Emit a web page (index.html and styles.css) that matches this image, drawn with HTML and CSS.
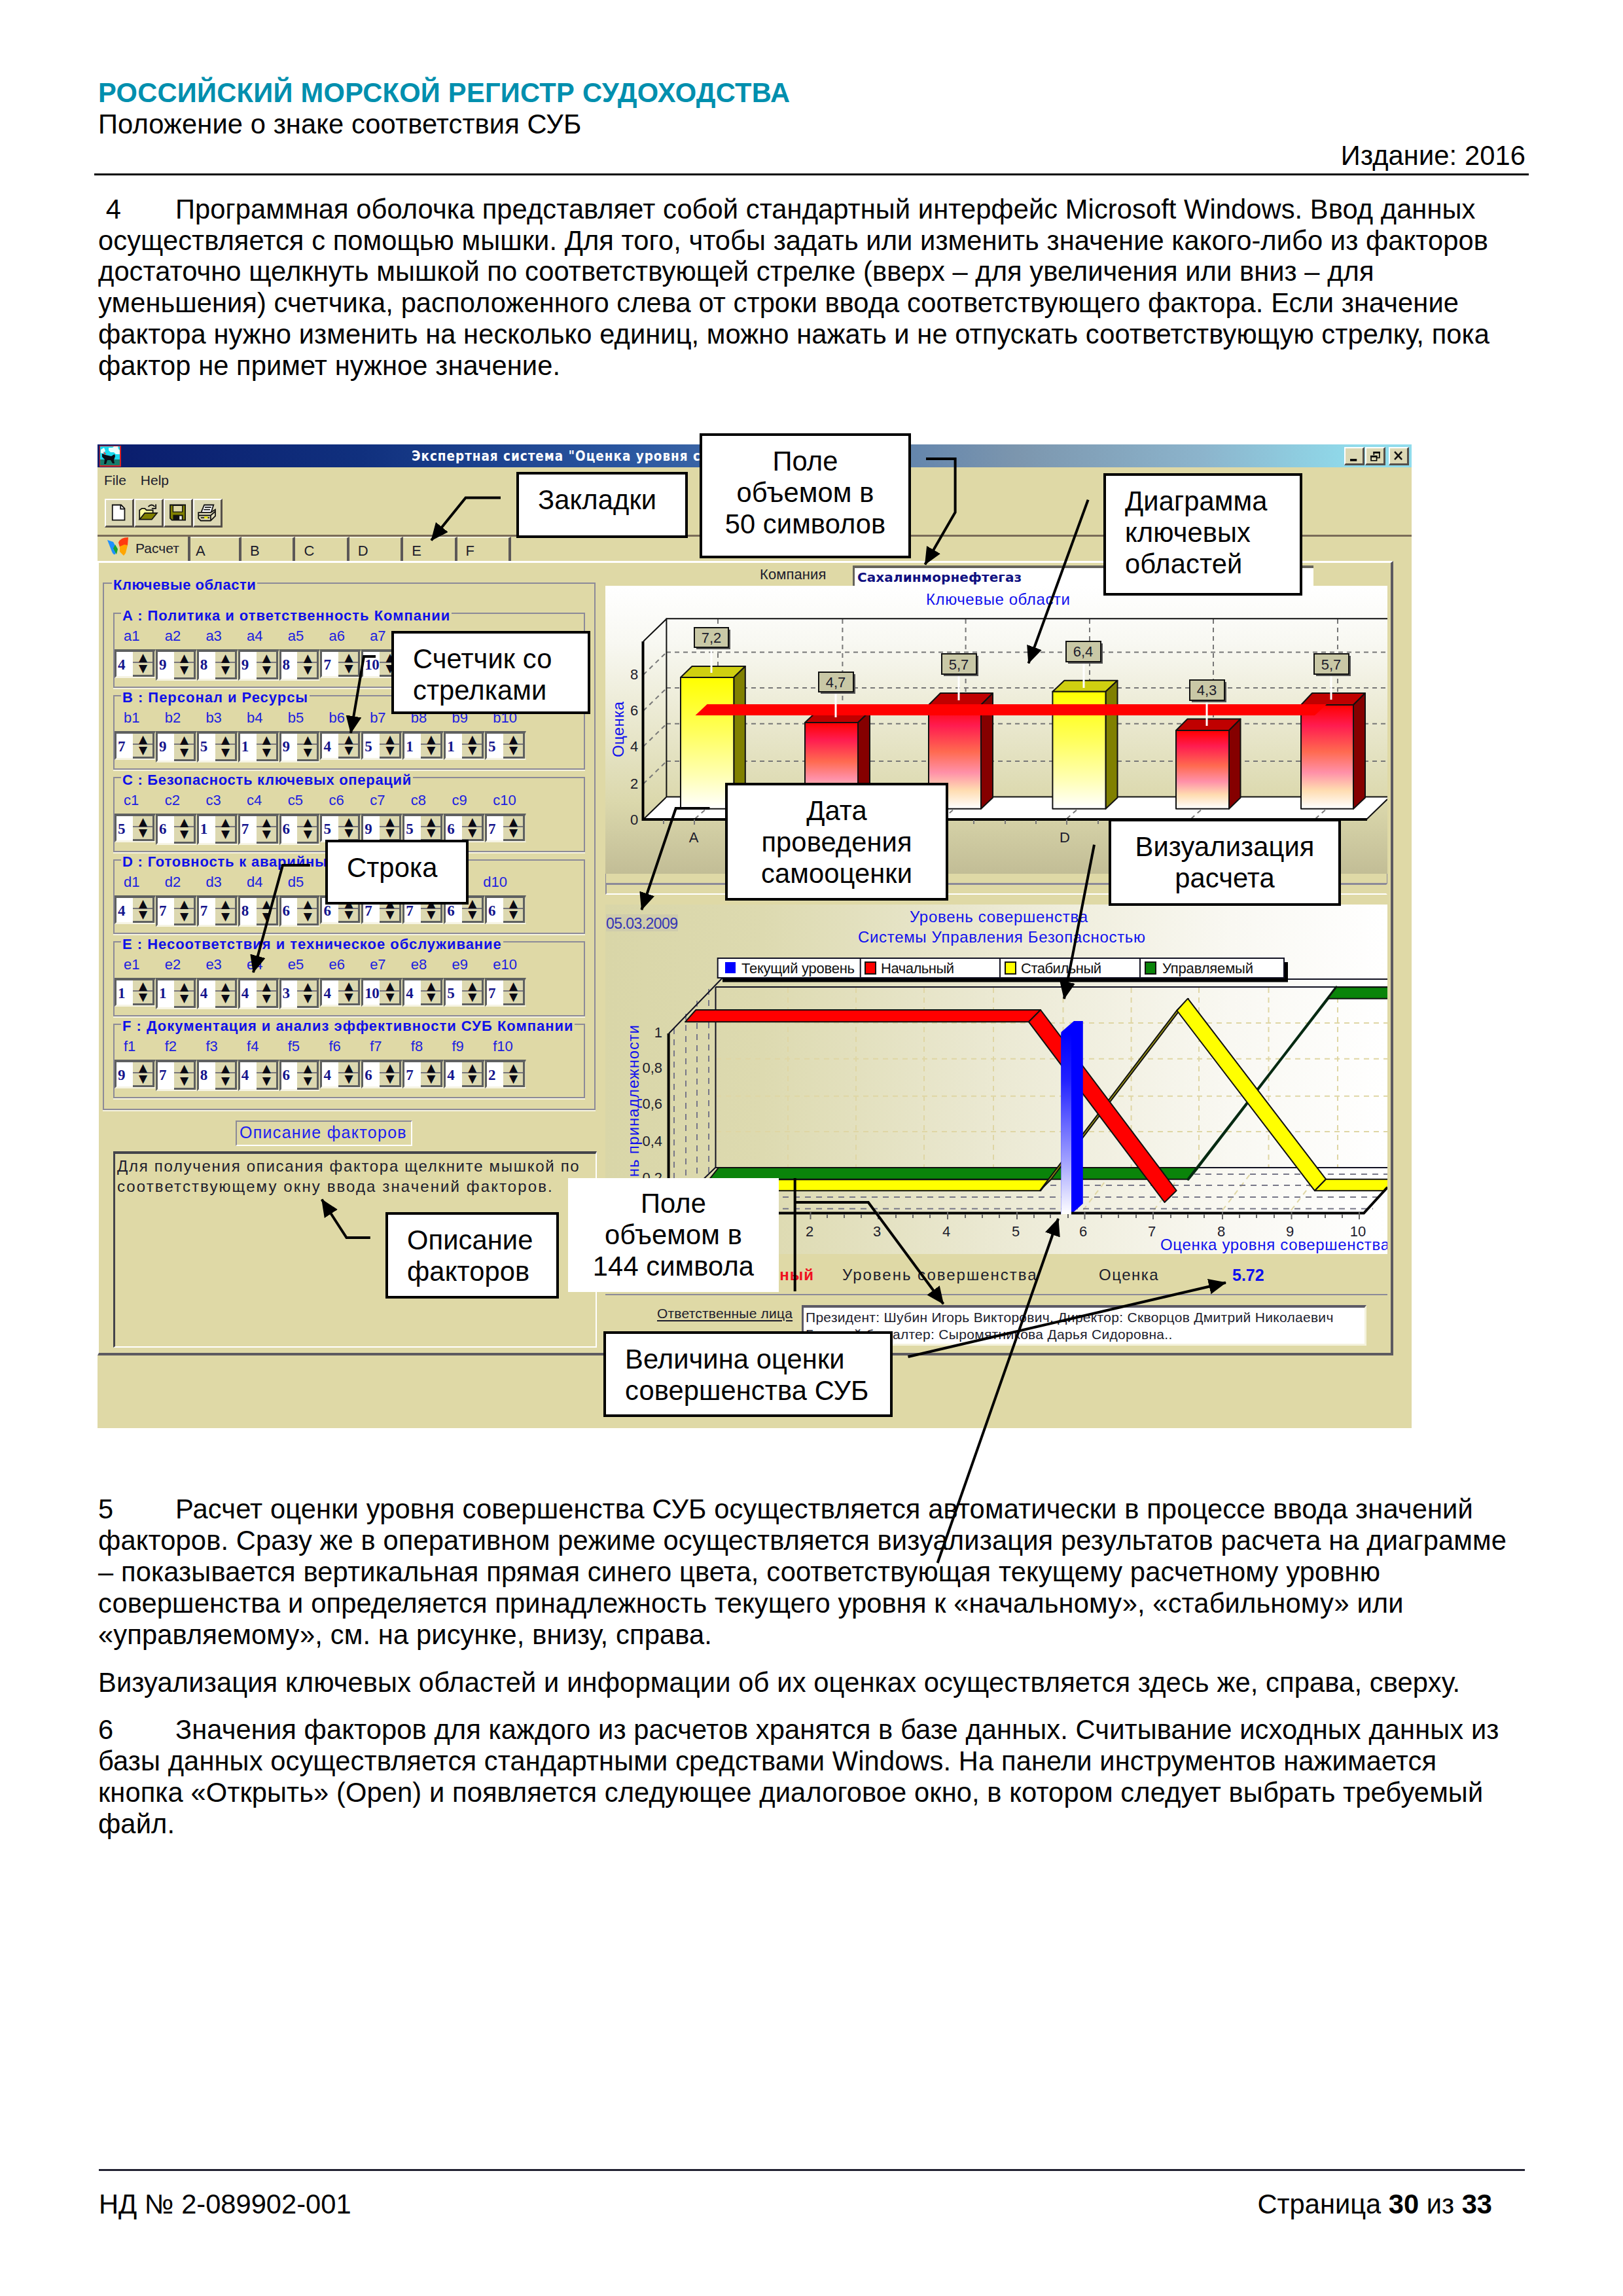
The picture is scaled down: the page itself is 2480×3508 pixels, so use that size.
FILE: index.html
```html
<!DOCTYPE html>
<html lang="ru">
<head>
<meta charset="utf-8">
<title>Положение о знаке соответствия СУБ</title>
<link rel="stylesheet" href="styles.css">
</head>
<body>
<div class="sheet">
  <header class="head">
    <div class="org">РОССИЙСКИЙ МОРСКОЙ РЕГИСТР СУДОХОДСТВА</div>
    <div>Положение о знаке соответствия СУБ</div>
    <div class="edition">Издание: 2016</div>
  </header>

  <p class="para first"><span class="num">&nbsp;4</span>Программная оболочка представляет собой стандартный интерфейс Microsoft Windows. Ввод данных<br>осуществляется с помощью мышки. Для того, чтобы задать или изменить значение какого-либо из факторов<br>достаточно щелкнуть мышкой по соответствующей стрелке (вверх – для увеличения или вниз – для<br>уменьшения) счетчика, расположенного слева от строки ввода соответствующего фактора. Если значение<br>фактора нужно изменить на несколько единиц, можно нажать и не отпускать соответствующую стрелку, пока<br>фактор не примет нужное значение.</p>

  <figure class="figure">
    <div class="app">
      <div class="titlebar">
        <svg class="appicon" viewBox="0 0 33 32"><rect width="33" height="32" fill="#d22"/><rect x="1" y="1" width="30" height="29" fill="#19d8ee"/><path d="M14 3h6l2-2h6l1 4 2 2v6h-6l-3-3h-5l-3-3zM2 6l5-3 2 5-4 4-3-1z" fill="#e8ffff"/><path d="M1 21h30v9H1z" fill="#177c6c"/><path d="M4 12l5 2 9 2 5-3 1 3-2 6 1 5h-3l-3-5h-5l-2 6H7l1-7-4-4z" fill="#0a0a14"/><path d="M6 9l4 3-2 2z" fill="#e33"/></svg>
        <span class="caption">Экспертная система "Оценка уровня совершенства"</span>
        <span class="winbtns">
          <svg class="wb" viewBox="0 0 30 27"><path d="M8 21h12" stroke="#000" stroke-width="4"/></svg>
          <svg class="wb" viewBox="0 0 30 27"><path d="M12 6h12v3H12zM7 13h12v3H7z" fill="#000"/><path d="M13 12V7h10v10h-4M8 14h10v8H8z" fill="none" stroke="#000" stroke-width="2"/></svg>
          <svg class="wb close" viewBox="0 0 30 27"><path d="M8 6l13 14M21 6L8 20" stroke="#111" stroke-width="3"/></svg>
        </span>
      </div>
      <div class="menubar"><span>File</span><span>Help</span></div>
      <div class="toolbar">
        <svg class="tb" viewBox="0 0 45 43"><path d="M11 8h15l6 6v20H11z" fill="#fff" stroke="#111" stroke-width="2"/><path d="M25 8v7h7" fill="none" stroke="#111" stroke-width="2"/></svg>
        <svg class="tb" viewBox="0 0 45 43"><path d="M7 33V17l4-3h5l3 3h11v5" fill="#ffffa0" stroke="#111" stroke-width="2"/><path d="M7 33l9-11h21L28 33z" fill="#808000" stroke="#111" stroke-width="2"/><path d="M22 11q6-6 11 0M35 7v7h-7" fill="none" stroke="#111" stroke-width="2"/></svg>
        <svg class="tb" viewBox="0 0 45 43"><path d="M9 8h26v26H12l-3-3z" fill="#808000" stroke="#111" stroke-width="2"/><path d="M14 9h16v11H14z" fill="#dfd9a6" stroke="#111" stroke-width="1.5"/><path d="M14 25h17v9H14z" fill="#111"/><path d="M25 27h4v6h-4z" fill="#eee"/></svg>
        <svg class="tb" viewBox="0 0 45 43"><path d="M12 20l5-12h16l-4 12" fill="#fff" stroke="#111" stroke-width="2"/><path d="M18 12h11M16 16h11" stroke="#111" stroke-width="2"/><path d="M7 21h21l8-5v11l-8 8H11l-4-4z" fill="#e4e0bd" stroke="#111" stroke-width="2"/><path d="M7 26h21v8M28 26l8-7M11 30h15" fill="none" stroke="#111" stroke-width="2"/><path d="M17 28h6v3h-6z" fill="#ee0"/></svg>
      </div>
      <div class="tabs">
        <div class="tab active"><svg class="logo" viewBox="0 0 32 28"><path d="M0 4l9 3 6 11-3 8q-3 1-5-4z" fill="#1e90ff"/><path d="M9 17l3-6 4 7-2 8z" fill="#1ca32a"/><path d="M17 8q3-8 15-8l-1 12-6 5-6-2z" fill="#ff3a10"/><path d="M19 14l7-3 5 1-3 12-3 4-6-6z" fill="#ffa500"/></svg><span>Расчет</span></div>
        <div class="tab">A</div><div class="tab">B</div><div class="tab">C</div><div class="tab">D</div><div class="tab">E</div><div class="tab">F</div>
      </div>

      <div class="page">
        <div class="left">
          <fieldset class="areas">
            <legend>Ключевые области</legend>
            <fieldset class="group">
              <legend class="la">A : Политика и ответственность Компании</legend>
              <div class="names"><span>a1</span><span>a2</span><span>a3</span><span>a4</span><span>a5</span><span>a6</span><span>a7</span><span>a8</span><span>a9</span><span>a10</span></div>
              <div class="spins"><span>4</span><span>9</span><span>8</span><span>9</span><span>8</span><span>7</span><span>10</span><span>8</span><span>7</span><span>6</span></div>
            </fieldset>
            <fieldset class="group">
              <legend class="lb">B : Персонал и Ресурсы</legend>
              <div class="names"><span>b1</span><span>b2</span><span>b3</span><span>b4</span><span>b5</span><span>b6</span><span>b7</span><span>b8</span><span>b9</span><span>b10</span></div>
              <div class="spins"><span>7</span><span>9</span><span>5</span><span>1</span><span>9</span><span>4</span><span>5</span><span>1</span><span>1</span><span>5</span></div>
            </fieldset>
            <fieldset class="group">
              <legend class="lc">C : Безопасность ключевых операций</legend>
              <div class="names"><span>c1</span><span>c2</span><span>c3</span><span>c4</span><span>c5</span><span>c6</span><span>c7</span><span>c8</span><span>c9</span><span>c10</span></div>
              <div class="spins"><span>5</span><span>6</span><span>1</span><span>7</span><span>6</span><span>5</span><span>9</span><span>5</span><span>6</span><span>7</span></div>
            </fieldset>
            <fieldset class="group">
              <legend class="ld">D : Готовность к аварийным ситуациям</legend>
              <div class="names"><span>d1</span><span>d2</span><span>d3</span><span>d4</span><span>d5</span><span>d6</span><span>d7</span><span>d8</span><span>d9</span><span class="near">d10</span></div>
              <div class="spins"><span>4</span><span>7</span><span>7</span><span>8</span><span>6</span><span>6</span><span>7</span><span>7</span><span>6</span><span>6</span></div>
            </fieldset>
            <fieldset class="group">
              <legend class="le">E : Несоответствия и техническое обслуживание</legend>
              <div class="names"><span>e1</span><span>e2</span><span>e3</span><span>e4</span><span>e5</span><span>e6</span><span>e7</span><span>e8</span><span>e9</span><span>e10</span></div>
              <div class="spins"><span>1</span><span>1</span><span>4</span><span>4</span><span>3</span><span>4</span><span>10</span><span>4</span><span>5</span><span>7</span></div>
            </fieldset>
            <fieldset class="group">
              <legend class="lf">F : Документация и анализ эффективности СУБ Компании</legend>
              <div class="names"><span>f1</span><span>f2</span><span>f3</span><span>f4</span><span>f5</span><span>f6</span><span>f7</span><span>f8</span><span>f9</span><span>f10</span></div>
              <div class="spins"><span>9</span><span>7</span><span>8</span><span>4</span><span>6</span><span>4</span><span>6</span><span>7</span><span>4</span><span>2</span></div>
            </fieldset>
          </fieldset>
          <div class="desc-title">Описание факторов</div>
          <div class="memo">Для получения описания фактора щелкните мышкой по<br><span class="m2">соответствующему окну ввода значений факторов.</span></div>
        </div>

        <div class="right">
          <div class="company"><span class="clabel">Компания</span><div class="cinput">Сахалинморнефтегаз</div></div>

          <svg class="chart1" viewBox="925 896 1195 440" font-family="Liberation Sans, Arial, sans-serif">
            <defs>
              <linearGradient id="bg1" x2="0" y2="1"><stop offset="0" stop-color="#fff"/><stop offset=".2" stop-color="#f8f8f2"/><stop offset=".75" stop-color="#dbd8ac"/><stop offset="1" stop-color="#c2bd96"/></linearGradient>
              <linearGradient id="yel" x2="0" y2="1"><stop offset="0" stop-color="#ff0"/><stop offset=".4" stop-color="#ffff58"/><stop offset=".75" stop-color="#ffffb4"/><stop offset="1" stop-color="#fff"/></linearGradient>
              <linearGradient id="red" x2="0" y2="1"><stop offset="0" stop-color="#f00"/><stop offset=".2" stop-color="#ff1c50"/><stop offset=".45" stop-color="#ff6a50"/><stop offset=".65" stop-color="#ff90a8"/><stop offset=".82" stop-color="#ffdcb0"/><stop offset="1" stop-color="#fff"/></linearGradient>
            </defs>
            <rect x="925" y="896" width="1195" height="440" fill="url(#bg1)"/>
            <path d="M983 1253L1018 1218.600H2120V1222L2088 1253z" fill="#fff"/>
            <g stroke="#777" stroke-width="2" stroke-dasharray="7 6" fill="none">
              <path d="M1018 997.400H2120M1018 1052H2120M1018 1106.700H2120M1018 1164H2120"/>
              <path d="M1097 947V1218M1287.400 947V1218M1475.600 947V1218M1665 947V1218M1854 947V1218M2044 947V1218"/>
              <path d="M983 1032l35-34M983 1087l35-34M983 1141.500l35-34M983 1198.600l35-34"/>
              <path d="M1062 1252l18-16M1441 1252l18-16M1630 1252l18-16M1820 1252l18-16M2010 1252l18-16"/>
            </g>
            <path d="M2120 946.200H1018.400V1218.600H2120M983 981L1018 947M983 1253l35-34M2088 1253l32-31" fill="none" stroke="#111" stroke-width="2"/>
            <path d="M982.500 981V1253H2089" fill="none" stroke="#000" stroke-width="4"/>
            <path d="M1061 1253v8M1630 1253v8M1014 1254v6M1488 1254v6M1536 1254v6M1583 1254v6M1678 1254v6" stroke="#777" stroke-width="2"/>
            <g stroke="#111" stroke-width="2" stroke-linejoin="round">
              <g><path d="M1040 1036l17.500-17h81.300L1121.300 1036z" fill="#cfcf10"/><path d="M1121.300 1036l17.500-17V1219.800L1121.300 1236.800z" fill="#808000"/><path d="M1040 1036h81.300v200.800H1040z" fill="url(#yel)"/></g>
              <g><path d="M1230 1105l18-17h81L1311 1105z" fill="#c00000"/><path d="M1311 1105l18-17V1219.800L1311 1236.800z" fill="#850000"/><path d="M1230 1105h81v131.800H1230z" fill="url(#red)"/></g>
              <g><path d="M1419 1078l18-18h80L1499 1078z" fill="#c00000"/><path d="M1499 1078l18-18V1219.800L1499 1236.800z" fill="#850000"/><path d="M1419 1078h80v158.800H1419z" fill="url(#red)"/></g>
              <g><path d="M1608.400 1057.700l18-17h81L1689.500 1057.700z" fill="#cfcf10"/><path d="M1689.500 1057.700l18-17V1219.800L1689.500 1236.800z" fill="#808000"/><path d="M1608.400 1057.700h81.100v179.100H1608.400z" fill="url(#yel)"/></g>
              <g><path d="M1797 1117l17.500-17.500h81L1878 1117z" fill="#c00000"/><path d="M1878 1117l17.500-17.500V1219.800L1878 1236.800z" fill="#850000"/><path d="M1797 1117h81v119.800H1797z" fill="url(#red)"/></g>
              <g><path d="M1988 1078l17-18h81L2068 1078z" fill="#c00000"/><path d="M2068 1078l18-18V1219.800L2068 1236.800z" fill="#850000"/><path d="M1988 1078h80v158.800H1988z" fill="url(#red)"/></g>
            </g>
            <path d="M1062.500 1094l18-17H2027L2009 1094z" fill="#f00"/>
            <path d="M1087 991v38M1277 1058v39M1465 1031v40M1656 1012v40M1844 1071v39M2034 1031v39" stroke="#fff" stroke-width="3"/>
            <g fill="#555"><path d="M1064 963h52v30h-52zM1254 1031h53v30h-53zM1442 1003h53v31h-53zM1632 984h53v31h-53zM1821 1043h53v31h-53zM2011 1003h53v31h-53z"/></g>
            <g fill="#c9c8a6" stroke="#111" stroke-width="2"><path d="M1061 960h52v30h-52zM1251 1028h53v30h-53zM1439 1000h53v31h-53zM1629 981h53v31h-53zM1818 1040h53v31h-53zM2008 1000h53v31h-53z"/></g>
            <g font-size="22" fill="#1c1c2c" text-anchor="middle">
              <text x="1087" y="983">7,2</text><text x="1277" y="1051">4,7</text><text x="1465" y="1024">5,7</text><text x="1655" y="1004">6,4</text><text x="1844" y="1063">4,3</text><text x="2034" y="1024">5,7</text>
              <text x="969" y="1039">8</text><text x="969" y="1094">6</text><text x="969" y="1149">4</text><text x="969" y="1206">2</text><text x="969" y="1261">0</text>
              <text x="1060" y="1288">A</text><text x="1627" y="1288">D</text>
            </g>
            <text x="1415" y="925" font-size="24" fill="#11e" textLength="220">Ключевые области</text>
            <text transform="translate(953 1158) rotate(-90)" font-size="24" fill="#11e" textLength="85">Оценка</text>
          </svg>
          <div class="strip"></div>

          <svg class="chart2" viewBox="925 1383 1195 534" font-family="Liberation Sans, Arial, sans-serif">
            <defs>
              <linearGradient id="bg2"><stop offset="0" stop-color="#d9d6a8"/><stop offset=".2" stop-color="#dddab0"/><stop offset=".5" stop-color="#ebe9d3"/><stop offset=".8" stop-color="#f9f8f2"/><stop offset="1" stop-color="#fff"/></linearGradient>
              <linearGradient id="blu" x2="0" y2="1"><stop offset="0" stop-color="#00f"/><stop offset=".25" stop-color="#2020ff"/><stop offset=".7" stop-color="#a0a0ff"/><stop offset="1" stop-color="#fff"/></linearGradient>
            </defs>
            <rect x="925" y="1383" width="1195" height="534" fill="url(#bg2)"/>
            <rect x="926" y="1398" width="110" height="26" fill="#cfccac"/>
            <g stroke="#dfd6a4" stroke-width="2" stroke-dasharray="8 7" fill="none">
              <path d="M1094 1564H2120M1094 1618.700H2120M1094 1675.700H2120M1094 1730H2120"/>
              <path d="M1204 1510V1785M1308 1510V1785M1412 1510V1785M1518 1510V1785M1624.500 1510V1785M1728.600 1510V1785M1832 1510V1785M1938.500 1510V1785M2044 1510V1785"/>
              <path d="M1655 1850l46-60M1763 1850l46-60M1868 1850l46-60M1973 1850l46-60"/>
            </g>
            <g stroke="#777788" stroke-width="2" stroke-dasharray="9 8" fill="none">
              <path d="M1030 1572V1847M1048 1550V1830M1065 1530V1812M1083 1512V1797"/>
              <path d="M1825 1795H2120M1605 1812H2118M1094 1830H2114M1060 1847.700H2098"/>
            </g>
            <path d="M1022 1580L1104 1495M1960 1497H2120M1093.500 1509H2120M1093.500 1509V1785H2120M1022 1854L1093 1785" fill="none" stroke="#112" stroke-width="2"/>
            <g stroke="#111" stroke-width="2" stroke-linejoin="round">
              <path d="M1084 1802.700L1098 1785H1830L1815.600 1802.700z" fill="#0a840a"/>
              <path d="M1815.600 1802.700L1830 1785L2042 1509.300L2029 1526.700z" fill="#062a12" stroke="#062a12" stroke-width="4"/>
              <path d="M2042 1509.300H2122V1526.700H2029z" fill="#0a840a"/>
              <path d="M1063 1820.300L1076 1803.300H1603L1590 1820.300z" fill="#ff0"/>
              <path d="M1589 1820L1606 1803L1816 1527L1798 1545z" fill="#a09a10"/>
              <path d="M1798.400 1545L1815 1526.700L2026 1802.700L2009 1820.300z" fill="#ff0"/>
              <path d="M2026 1802.700H2122V1813L2116 1820.300H2009z" fill="#ff0"/>
              <path d="M1047 1562.300L1063.300 1544H1590L1572 1562.300z" fill="#f00"/>
              <path d="M1572 1562.300L1590 1544L1797.700 1820L1779.500 1838z" fill="#f00"/>
            </g>
            <path d="M1621.400 1578L1641 1561H1654.800V1840L1637 1856H1621.400z" fill="#00f"/>
            <path d="M1621.400 1580H1637V1856H1621.400z" fill="url(#blu)"/>
            <path d="M1021.600 1580V1854.500H1621M1637 1854.500H2084L2120 1815" fill="none" stroke="#000" stroke-width="4"/>
            <path d="M1238.500 1853v11M1342 1853v11M1448 1853v11M1554 1853v11M1657.500 1853v11M1762 1853v11M1868 1853v11M1973.500 1853v11M2077 1853v11M1264 1856v6M1290 1856v6M1316 1856v6M1369 1856v6M1395 1856v6M1421 1856v6M1475 1856v6M1501 1856v6M1527 1856v6M1580 1856v6M1605 1856v6M1632 1856v6M1683 1856v6M1709 1856v6M1736 1856v6M1789 1856v6M1815 1856v6M1840 1856v6M1894 1856v6M1920 1856v6M1947 1856v6M1999 1856v6M2025 1856v6M2051 1856v6" stroke="#666" stroke-width="2"/>
            <path d="M1104 1471H1968V1501.500H1104z" fill="#000"/>
            <path d="M1096.700 1465H1962V1495H1096.700zM1314.700 1465V1495M1528 1465V1495M1742 1465V1495" fill="#fff" stroke="#112" stroke-width="2"/>
            <path d="M1108 1471h16v17h-16z" fill="#00f"/>
            <g stroke="#111" stroke-width="2"><path d="M1322 1471h16v18h-16z" fill="#f00"/><path d="M1536 1471h16v18h-16z" fill="#ff0"/><path d="M1750 1471h16v18h-16z" fill="#0a840a"/></g>
            <g font-size="22" fill="#111">
              <text x="1133" y="1488" textLength="173">Текущий уровень</text><text x="1346" y="1488" textLength="112">Начальный</text><text x="1560" y="1488" textLength="123">Стабильный</text><text x="1776" y="1488" textLength="139">Управляемый</text>
            </g>
            <g font-size="22" fill="#1c1c2c" text-anchor="end">
              <text x="1012" y="1586">1</text><text x="1012" y="1640">0,8</text><text x="1012" y="1695">0,6</text><text x="1012" y="1752">0,4</text><text x="1012" y="1808">0,2</text>
            </g>
            <g font-size="22" fill="#1c1c2c" text-anchor="middle">
              <text x="1237" y="1890">2</text><text x="1340" y="1890">3</text><text x="1446" y="1890">4</text><text x="1552" y="1890">5</text><text x="1655" y="1890">6</text><text x="1760" y="1890">7</text><text x="1866" y="1890">8</text><text x="1971" y="1890">9</text><text x="2075" y="1890">10</text>
            </g>
            <g font-size="24" fill="#11e">
              <text x="926" y="1420" font-size="23" fill="#3434b4" textLength="110">05.03.2009</text>
              <text x="1390" y="1410" textLength="272">Уровень совершенства</text>
              <text x="1311" y="1441" textLength="439">Системы Управления Безопасностью</text>
              <text x="1773" y="1911" textLength="350">Оценка уровня совершенства</text>
              <text transform="translate(976 1871) rotate(-90)" textLength="304">Степень принадлежности</text>
            </g>
          </svg>

          <div class="status"><span class="lvl">Начальный</span><span class="cap1">Уровень совершенства</span><span class="cap2">Оценка</span><b>5.72</b></div>
          <div class="resp"><span class="rlabel">Ответственные лица</span><div class="rinput">Президент: Шубин Игорь Викторович, Директор: Скворцов Дмитрий Николаевич<br>Главный бухгалтер: Сыромятникова Дарья Сидоровна..</div></div>
        </div>
      </div>
    </div>

    <div class="callout c1">Закладки</div>
    <div class="callout c2">Поле<br>объемом в<br>50 символов</div>
    <div class="callout c3">Диаграмма<br>ключевых<br>областей</div>
    <div class="callout c4">Счетчик со<br>стрелками</div>
    <div class="callout c5">Строка</div>
    <div class="callout c6">Дата<br>проведения<br>самооценки</div>
    <div class="callout c7">Визуализация<br>расчета</div>
    <div class="callout c8">Описание<br>факторов</div>
    <div class="callout c9">Поле<br>объемом в<br>144 символа</div>
    <div class="callout c10">Величина оценки<br>совершенства СУБ</div>

    <svg class="arrows" viewBox="149 679 2008 1740">
      <defs><marker id="tip" viewBox="0 0 27 24" refX="26" refY="12" markerWidth="27" markerHeight="24" markerUnits="userSpaceOnUse" orient="auto"><path d="M0 0L27 12L0 24z"/></marker></defs>
      <g fill="none" stroke="#000" stroke-width="4">
        <path d="M765 760.500H711.500L659 825.600" marker-end="url(#tip)"/>
        <path d="M1415 701H1459.600V782.700L1413.500 862.500" marker-end="url(#tip)"/>
        <path d="M1662.600 763.600L1571.600 1013.400" marker-end="url(#tip)"/>
        <path d="M574 1003H556L536 1120" marker-end="url(#tip)"/>
        <path d="M473.800 1322H432L387 1485.800" marker-end="url(#tip)"/>
        <path d="M1084.500 1235H1032.700L980.400 1390" marker-end="url(#tip)"/>
        <path d="M1672 1290.600L1626 1526" marker-end="url(#tip)"/>
        <path d="M565.800 1891H529.500L491.700 1832.700" marker-end="url(#tip)"/>
        <path d="M1215.600 1837H1326.800L1441.500 1992.300" marker-end="url(#tip)"/>
        <path d="M1387.500 2073L1873 1959.700" marker-end="url(#tip)"/>
        <path d="M1432.600 2388L1617 1862" marker-end="url(#tip)"/>
        <path d="M1214.700 1800V1973"/>
      </g>
    </svg>
  </figure>

  <p class="para"><span class="num">5</span>Расчет оценки уровня совершенства СУБ осуществляется автоматически в процессе ввода значений<br>факторов. Сразу же в оперативном режиме осуществляется визуализация результатов расчета на диаграмме<br>– показывается вертикальная прямая синего цвета, соответствующая текущему расчетному уровню<br>совершенства и определяется принадлежность текущего уровня к «начальному», «стабильному» или<br>«управляемому», см. на рисунке, внизу, справа.</p>
  <p class="para">Визуализация ключевых областей и информации об их оценках осуществляется здесь же, справа, сверху.</p>
  <p class="para last"><span class="num">6</span>Значения факторов для каждого из расчетов хранятся в базе данных. Считывание исходных данных из<br>базы данных осуществляется стандартными средствами Windows. На панели инструментов нажимается<br>кнопка «Открыть» (Open) и появляется следующее диалоговое окно, в котором следует выбрать требуемый<br>файл.</p>

  <footer class="foot"><span>НД № 2-089902-001</span><span class="pages">Страница <b>30</b> из <b>33</b></span></footer>
</div>
</body>
</html>
```
FILE: styles.css
```css
* { box-sizing: border-box; }
body {
  margin: 0;
  background: #fff;
  color: #000;
  font-family: "Liberation Sans", Arial, sans-serif;
  font-size: 41.67px;
  line-height: 47.9px;
}
.sheet {
  width: 2480px;
  height: 3508px;
  padding: 117.6px 144px 116.5px 149px;
  display: flex;
  flex-direction: column;
  white-space: nowrap;
}

/* running head */
.head {
  margin-left: -5px;
  padding-left: 6px;
  height: 150px;
  line-height: 48.2px;
  border-bottom: 3px solid #000;
  letter-spacing: 0.1px;
}
.org { color: #008fae; font-weight: bold; letter-spacing: 0.26px; }
.edition { text-align: right; padding-right: 5px; }

.para { margin: 0 0 25px 1px; letter-spacing: 0.13px; }
.para.first { margin-top: 28px; margin-bottom: 0; letter-spacing: 0.07px; }
.para.last { letter-spacing: 0.1px; }
.num { display: inline-block; width: 118px; }

.foot {
  margin: auto 6px 0 2px;
  padding: 27px 50px 0 0;
  border-top: 3px solid #223;
  display: flex;
  justify-content: space-between;
}

/* figure */
.figure {
  position: relative;
  width: 2008px;
  height: 1503px;
  margin: 96px 0 100px;
  flex: none;
}
.app {
  width: 2008px;
  height: 1503px;
  background: #dfd9a6;
  display: flex;
  flex-direction: column;
  font-size: 21.5px;
  line-height: 26px;
  color: #1c1c2c;
}
.titlebar {
  height: 35px;
  padding: 0 4px 0 3px;
  display: flex;
  align-items: center;
  background: linear-gradient(90deg, #0a1c6c 0%, #10307e 20%, #2a56a0 40%, #5078ac 55%, #7c96ae 70%, #8cb4cc 84%, #90dcec 96%);
}
.appicon { width: 33px; height: 32px; }
.caption {
  margin-left: 444px;
  color: #fff;
  font-weight: bold;
  font-family: "DejaVu Sans Condensed", "DejaVu Sans", sans-serif;
  font-stretch: condensed;
  font-size: 20.500px;
  letter-spacing: 0.95px;
  width: 700px;
}
.winbtns { margin-left: auto; display: flex; gap: 1px; }
.wb, .tb {
  background: #dcd8b4;
  border: solid;
  border-width: 2px 3px 3px 2px;
  border-color: #fff #56504a #56504a #fff;
}
.wb { width: 31px; height: 28px; }
.wb.close { margin-left: 4px; }
.menubar { height: 48px; padding: 6px 10px 0; display: flex; gap: 22px; font-size: 21px; line-height: 28px; }
.toolbar { height: 55px; padding-left: 11px; display: flex; }
.tb { width: 45px; height: 44px; }

.tabs { height: 40px; display: flex; border-top: 3px solid #7a6c58; }
.tab {
  width: 82.4px;
  padding: 6px 0 0 13px;
  font-size: 22px;
  line-height: 28px;
  border-right: 4px solid #5c5858;
  border-top: 2px solid #f4f2dc;
}
.tab:nth-child(2) { width: 78px; padding-left: 8px; }
.tab.active { width: 142px; padding: 0 0 0 15px; display: flex; gap: 11px; border-top: 0; }
.tab.active span { padding-top: 4px; font-size: 21px; letter-spacing: 0; }
.logo { width: 32px; height: 28px; margin-top: 1px; }

.page {
  width: 1980px;
  height: 1214px;
  border: solid;
  border-width: 3px 4px 4px 2px;
  border-color: #fff #5c5a60 #5c5a60 #fff;
  padding: 0 4px 0 6px;
  display: flex;
  gap: 13px;
}
.left { width: 755px; padding-top: 16px; }

/* group boxes */
fieldset {
  margin: 0;
  min-width: 0;
  padding: 0;
  border: 2px solid #8c8a98;
  box-shadow: 0 2px 0 #f6f4e0;
}
legend {
  padding: 6px 2px 0;
  height: 29px;
  line-height: 24px;
  font-weight: bold;
  font-size: 22px;
  color: #1010e8;
}
.areas { width: 753px; height: 820px; padding: 17.500px 0 0 14px; }
.areas > legend { margin-left: -2px; letter-spacing: 0.5px; }
.group { width: 721px; height: 128.400px; margin-top: -2.900px; }
.areas > legend + .group { margin-top: 0; }
.group > legend { margin-left: 10px; letter-spacing: 0.98px; }
.group > .lc { letter-spacing: 0.7px; }
.group > .ld { letter-spacing: 0.8px; }
.names {
  display: grid;
  grid-template-columns: repeat(10, 62.700px);
  padding-left: 14px;
  line-height: 40px;
  color: #2020e0;
  font-size: 22px;
}
.near { margin-left: -15px; }
.spins { display: grid; grid-template-columns: repeat(10, 62.900px); align-items: start; }
.spins span {
  height: 44px;
  display: flex;
  justify-content: space-between;
  padding-left: 2px;
  background: #fff;
  border: solid;
  border-width: 4px 2px 3px 3px;
  border-color: #5e6060 #dcd8b0 #f6f4e4 #5e6060;
  color: #14148c;
  font: bold 23px/40px "Liberation Serif", "Times New Roman", serif;
  letter-spacing: -0.5px;
}
.spins span::after {
  content: "▲\A▼";
  white-space: pre;
  width: 29px;
  height: 35px;
  padding-left: 1px;
  text-align: center;
  font: 17px/17px "DejaVu Sans", sans-serif;
  color: #0a0a14;
  background: linear-gradient(#dcd8b0 0 15px, #77757a 15px 17px, #dcd8b0 17px);
  border-right: 3px solid #5e6060;
  border-bottom: 3px solid #5e6060;
}
.spins span:nth-child(n+2):nth-child(-n+5) { height: 48px; }
.spins span:nth-child(n+2):nth-child(-n+5)::after { height: 39px; line-height: 18.500px; }

.desc-title {
  width: 270px;
  height: 39px;
  margin: 16px 0 0 203px;
  padding-left: 4px;
  border: 2px solid;
  border-color: #8c8a98 #fff #fff #8c8a98;
  color: #2020f0;
  font-size: 25px;
  line-height: 33px;
  letter-spacing: 1.300px;
}
.memo {
  width: 739px;
  height: 300px;
  margin: 8px 0 0 16px;
  padding: 3px 0 0 3px;
  border: solid;
  border-width: 4px 2px 2px 3px;
  border-color: #44444a #fff #fff #44444a;
  font-size: 24px;
  line-height: 31px;
  letter-spacing: 1.700px;
}
.m2 { letter-spacing: 2.100px; }

/* right side */
.right { width: 1195px; }
.company { height: 35px; display: flex; }
.clabel { margin-left: 236px; width: 142px; line-height: 36px; font-size: 22px; letter-spacing: 0.1px; }
.cinput {
  width: 704px;
  height: 31px;
  margin-top: 4px;
  padding-left: 4px;
  background: #fff;
  border-top: 4px solid #66645c;
  border-left: 3px solid #66645c;
  font: bold 20px/28px "DejaVu Sans", sans-serif;
  letter-spacing: 0.1px;
  color: #101080;
}
.chart1, .chart2 { display: block; width: 1195px; }
.chart1 { height: 440px; }
.chart2 { height: 534px; }
.strip {
  height: 17px;
  margin: 15px 0;
  border: 2px solid;
  border-color: #8c8a98 transparent #fff #8c8a98;
  box-shadow: 0 -17px 0 -1px #dfd9a6, 0 -17px 0 #8c8a98;
}
.status {
  height: 63px;
  border-bottom: 2px solid #8c8a98;
  font-size: 24px;
  line-height: 64px;
  display: flex;
}
.lvl { color: #f01020; font-weight: bold; width: 319px; text-align: right; margin-right: 43px; letter-spacing: 1px; }
.cap1 { width: 392px; letter-spacing: 2px; }
.cap2 { width: 204px; letter-spacing: 1.500px; }
.status b { color: #1010f0; font-size: 25px; }
.resp { display: flex; padding-top: 15px; }
.rlabel { margin-left: 79px; width: 221px; font-size: 21px; letter-spacing: 0.2px; text-decoration: underline; text-underline-offset: 3px; }
.rinput {
  width: 863px;
  height: 62px;
  padding: 2px 0 0 3px;
  overflow: hidden;
  background: #fff;
  border: solid;
  border-width: 4px 3px 3px 3px;
  border-color: #5c5a66 #f4f2dc #f4f2dc #5c5a66;
  font-size: 21px;
  line-height: 26px;
  letter-spacing: 0.3px;
}

/* callouts lie over the program window */
.callout {
  position: absolute;
  padding: 15px 29px 0;
  background: #fff;
  border: 4px solid #000;
  letter-spacing: 0.1px;
}
.c1 { left: 640px; top: 42px; width: 262px; height: 101px; }
.c2 { left: 920px; top: -17px; width: 323px; height: 191px; }
.c3 { left: 1537px; top: 44px; width: 304px; height: 187px; }
.c4 { left: 449px; top: 285px; width: 304px; height: 127px; }
.c5 { left: 348px; top: 604px; width: 219px; height: 99px; }
.c6 { left: 959px; top: 517px; width: 341px; height: 180px; }
.c7 { left: 1545px; top: 572px; width: 355px; height: 133px; }
.c8 { left: 440px; top: 1173px; width: 265px; height: 132px; }
.c9 { left: 719px; top: 1121px; width: 322px; height: 174px; border: 0; }
.c10 { left: 773px; top: 1355px; width: 442px; height: 131px; }
.c2, .c6, .c7, .c9 { padding-left: 0; padding-right: 0; text-align: center; }
.arrows { position: absolute; left: 0; top: 0; width: 2008px; height: 1740px; }
```
